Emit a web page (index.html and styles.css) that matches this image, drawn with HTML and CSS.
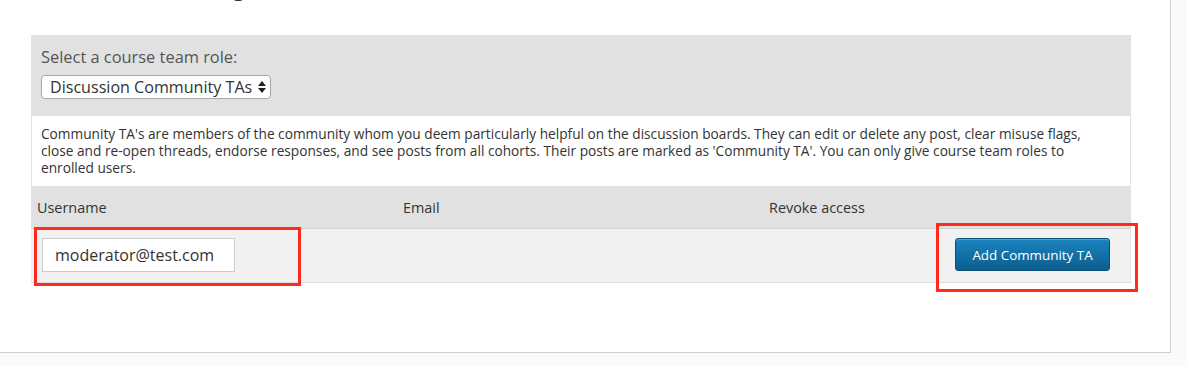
FILE: index.html
```html
<!DOCTYPE html>
<html>
<head>
<meta charset="utf-8">
<link rel="stylesheet" href="styles.css">
</head>
<body>
<div class="page">
  <h2 class="title">Course Team Management</h2>
  <div class="panel">
    <div class="role">
      <label class="role-label">Select a course team role:</label>
      <div class="select">
        <span>Discussion Community TAs</span>
        <svg class="arrows" width="8" height="12" viewBox="0 0 8 12"><path d="M4 0 L8 5 L0 5 Z M0 7 L8 7 L4 12 Z" fill="#222"/></svg>
      </div>
    </div>
    <div class="desc">Community TA's are members of the community whom you deem particularly helpful on the discussion boards. They can edit or delete any post, clear misuse flags,<br>close and re-open threads, endorse responses, and see posts from all cohorts. Their posts are marked as 'Community TA'. You can only give course team roles to<br>enrolled users.</div>
    <div class="thead">
      <div class="th">Username</div>
      <div class="th">Email</div>
      <div class="th">Revoke access</div>
    </div>
    <div class="row">
      <div class="input">moderator@test.com</div>
      <button class="btn">Add Community TA</button>
      <div class="mark mark-left"></div>
      <div class="mark mark-right"></div>
    </div>
  </div>
</div>
</body>
</html>
```
FILE: styles.css
```css
html, body {
  margin: 0;
  padding: 0;
}
body {
  background: #fafafa;
  font-family: "Open Sans", Lato, sans-serif;
  color: #333;
}
.page {
  width: 1171px;
  height: 353px;
  background: #fff;
  border-right: 1px solid #cfcfcf;
  border-bottom: 1px solid #cfcfcf;
  box-sizing: border-box;
  padding-top: 35px;
  position: relative;
  overflow: hidden;
}
.title {
  position: absolute;
  top: -30px;
  left: 19px;
  margin: 0;
  font-size: 23px;
  font-weight: 600;
  color: #333;
}
.panel {
  margin-left: 31px;
  width: 1100px;
}
.role {
  background: #e1e1e1;
  padding: 11px 10px 16px 10px;
  height: 81px;
  box-sizing: border-box;
}
.role-label {
  display: block;
  font-size: 16.4px;
  color: #555;
  line-height: 22px;
  margin-bottom: 7px;
}
.select {
  display: inline-flex;
  align-items: center;
  gap: 6px;
  height: 24px;
  box-sizing: border-box;
  padding: 0 4px 0 8px;
  background: #fff;
  border: 1px solid #a9a9a9;
  border-radius: 4px;
  font-size: 16.1px;
  color: #333;
}
.arrows {
  display: block;
}
.desc {
  background: #fff;
  border-left: 1px solid #e1e1e1;
  border-right: 1px solid #e1e1e1;
  padding: 9px 9px 10px 9px;
  font-size: 13.7px;
  line-height: 17px;
  color: #333;
  height: 70px;
  box-sizing: border-box;
  white-space: nowrap;
}
.thead {
  display: grid;
  grid-template-columns: 366px 366px 368px;
  background: #e1e1e1;
  height: 43px;
  align-items: center;
  border-bottom: 1px solid #d3d3d3;
  box-sizing: border-box;
}
.th {
  padding-left: 6px;
  font-size: 14.4px;
  color: #333;
}
.row {
  position: relative;
  display: flex;
  align-items: center;
  justify-content: space-between;
  background: #f1f1f1;
  height: 54px;
  box-sizing: border-box;
  border-bottom: 1px solid #dcdcdc;
  border-right: 1px solid #e4e4e4;
  padding: 0 20px 2px 11px;
}
.input {
  width: 193px;
  height: 34px;
  box-sizing: border-box;
  background: #fff;
  border: 1px solid #cdcdcd;
  padding-left: 12px;
  font-size: 16px;
  line-height: 32px;
  color: #333;
}
.btn {
  width: 155px;
  height: 33px;
  border: 1px solid #0b4f78;
  border-radius: 3px;
  background: linear-gradient(#1a84bf, #0d5e8e);
  color: #fff;
  font-family: "Open Sans", Lato, sans-serif;
  font-size: 13.4px;
  padding: 0;
  box-shadow: inset 0 1px 0 rgba(255,255,255,0.25);
}
.mark {
  position: absolute;
  border: 3px solid #ff2b1c;
  box-sizing: border-box;
}
.mark-left {
  left: 3px;
  top: -2px;
  width: 267px;
  height: 59px;
}
.mark-right {
  left: 905px;
  top: -6px;
  width: 202px;
  height: 69px;
}
```
